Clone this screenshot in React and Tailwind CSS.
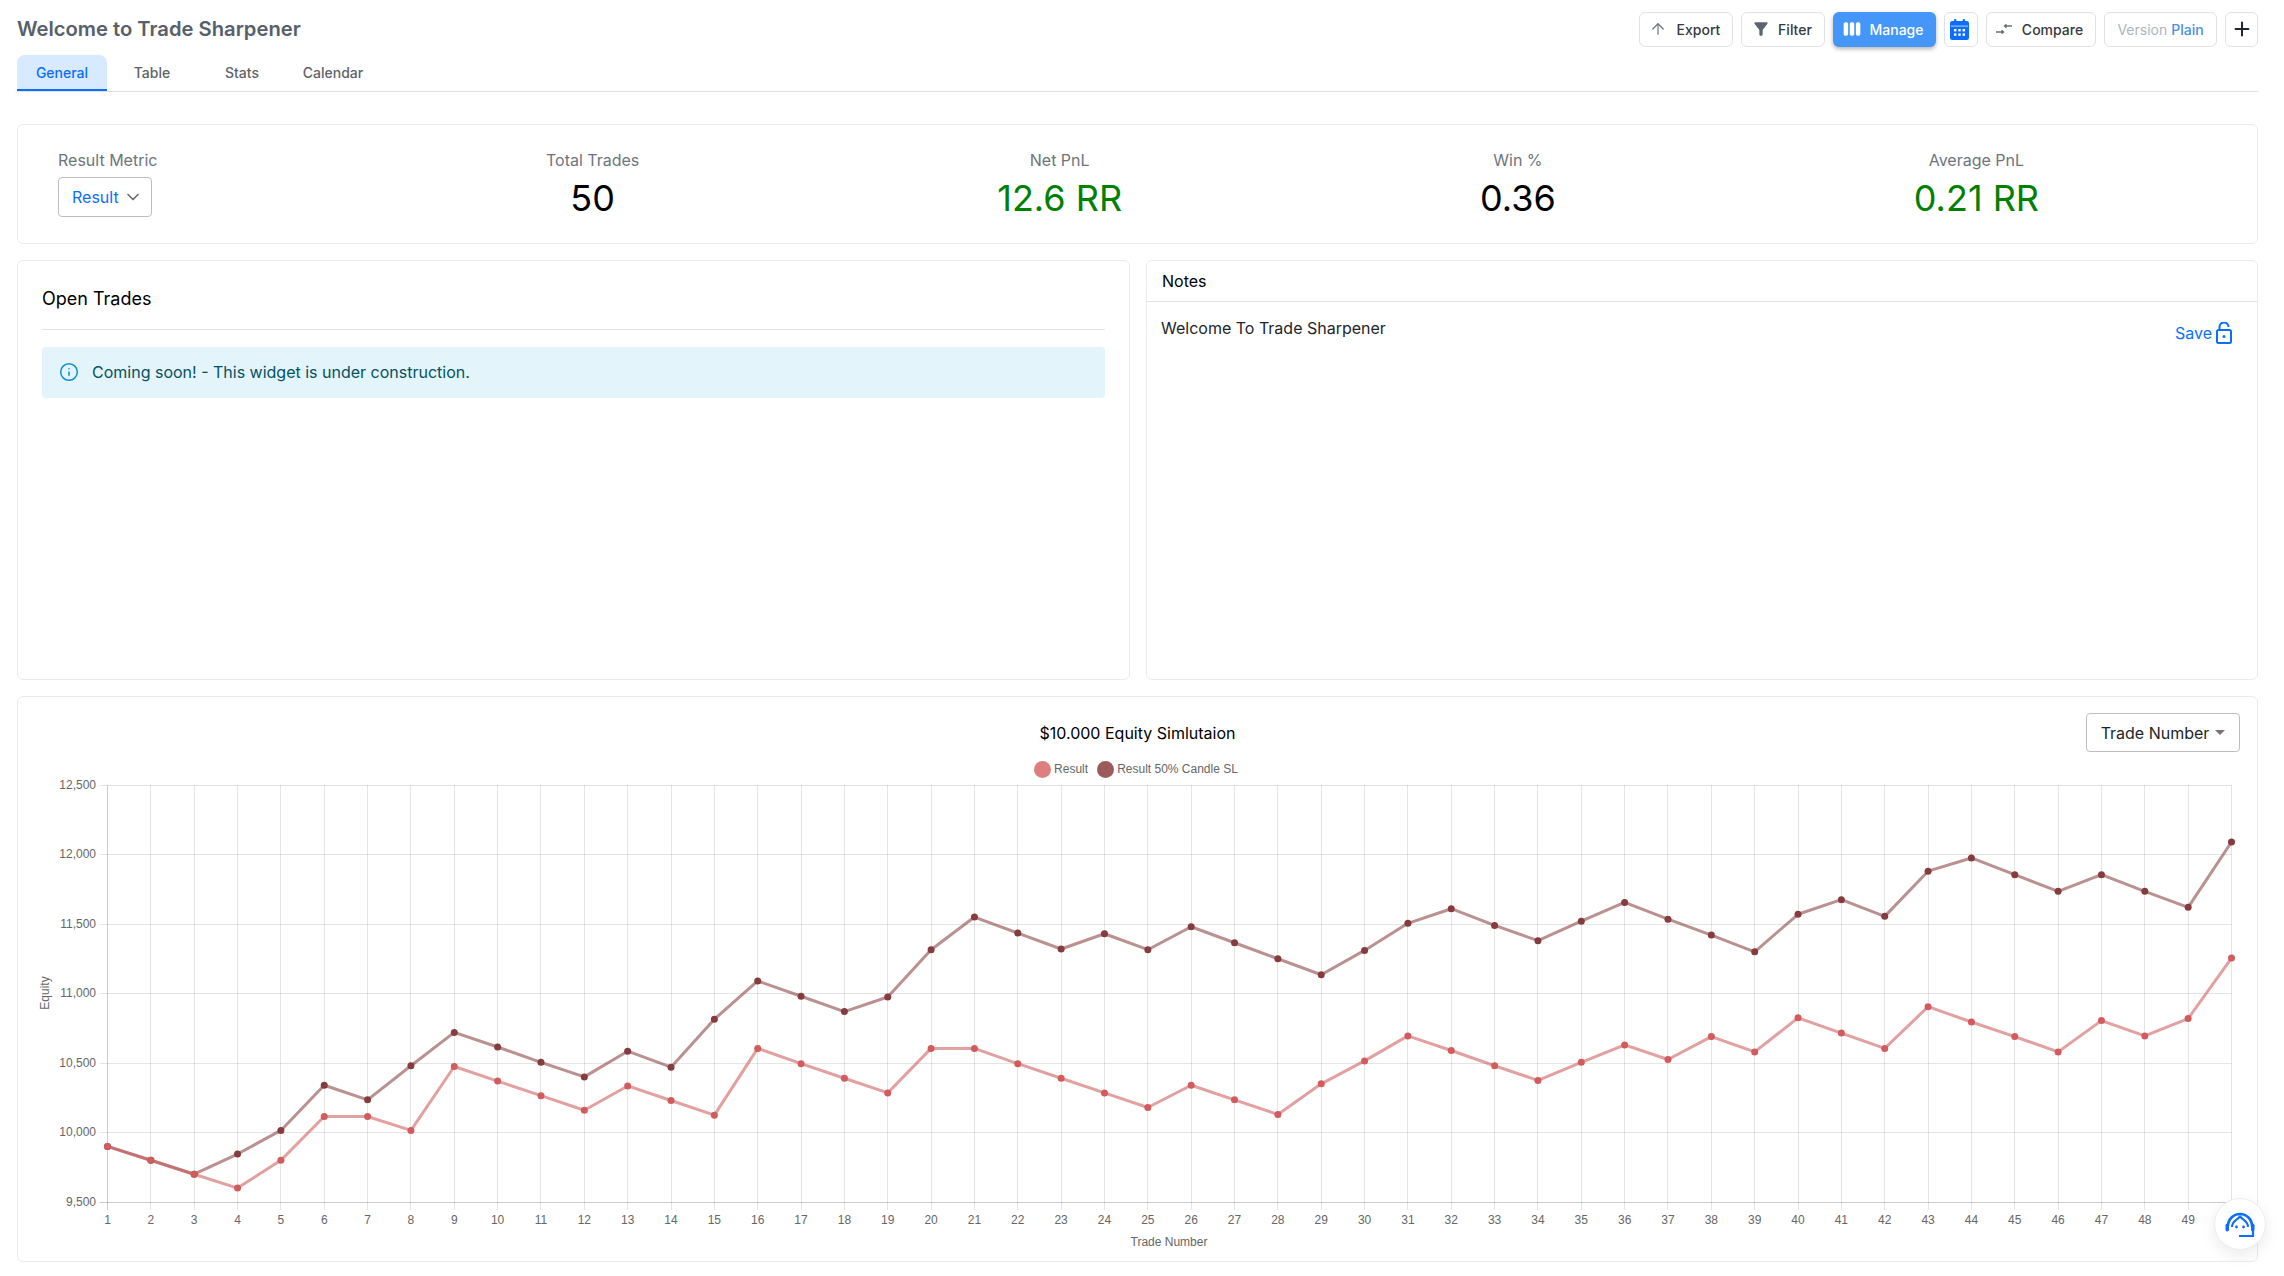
import React from "react";
import { ArrowUp, ChevronDown, Info, Plus } from "lucide-react";
import { MdFilterAlt, MdViewWeek } from "react-icons/md";

const font = { fontFamily: "Inter, 'Liberation Sans', sans-serif" };

const S1 = [9900,9800,9700,9600,9800,10115,10115,10015,10475,10370,10265,10160,10335,10230,10125,10605,10495,10390,10285,10605,10605,10495,10390,10285,10180,10340,10235,10130,10350,10515,10695,10590,10480,10375,10505,10630,10525,10690,10580,10825,10715,10605,10905,10795,10690,10580,10805,10695,10820,11255];
const S2 = [9900,9800,9700,9845,10015,10340,10235,10480,10720,10615,10505,10400,10585,10470,10815,11090,10980,10870,10975,11315,11550,11435,11320,11430,11315,11480,11365,11250,11135,11310,11505,11610,11490,11380,11520,11655,11535,11420,11300,11570,11675,11555,11880,11975,11855,11735,11855,11735,11620,12090];

const X0 = 107.5, X1 = 2231.5, YT = 785, YB = 1202;
const px = (i) => X0 + (i * (X1 - X0)) / 49;
const py = (v) => YB - ((v - 9500) / 3000) * (YB - YT);
const TICKS = [12500, 12000, 11500, 11000, 10500, 10000, 9500];

function Series({ data, line, point }) {
  return (
    <g>
      <polyline points={data.map((v, i) => `${px(i)},${py(v)}`).join(" ")} fill="none" stroke={line} strokeWidth="3" strokeLinejoin="round" />
      {data.map((v, i) => (
        <circle key={i} cx={px(i)} cy={py(v)} r="3.5" fill={point} />
      ))}
    </g>
  );
}

function Chart() {
  const txt = { fontFamily: "'Liberation Sans', Arial, sans-serif", fontSize: 12, fill: "#666" };
  return (
    <svg className="block w-full h-[482px]" viewBox="18 778 2239 482">
      {Array.from({ length: 50 }, (_, i) => {
        const x = Math.floor(px(i)) + 0.5;
        return (
          <g key={i}>
            <line x1={x} x2={x} y1={YT} y2={YB + 8} stroke={i === 0 ? "rgba(0,0,0,0.2)" : "rgba(0,0,0,0.1)"} />
            <text x={px(i)} y={1224} textAnchor="middle" {...txt}>{i + 1}</text>
          </g>
        );
      })}
      {TICKS.map((t) => {
        const y = Math.floor(py(t)) + 0.5;
        return (
          <g key={t}>
            <line x1={X0 - 8} x2={X1} y1={y} y2={y} stroke={t === 9500 ? "rgba(0,0,0,0.2)" : "rgba(0,0,0,0.1)"} />
            <text x={96} y={y + 3.5} textAnchor="end" {...txt}>{t.toLocaleString("en-US")}</text>
          </g>
        );
      })}
      <Series data={S2} line="rgba(128,50,50,0.54)" point="#853c3e" />
      <Series data={S1} line="rgba(205,92,92,0.58)" point="#d25b5d" />
      <text x={1169} y={1245.5} textAnchor="middle" {...txt}>Trade Number</text>
      <text transform="translate(49 993) rotate(-90)" textAnchor="middle" {...txt}>Equity</text>
    </svg>
  );
}

function Btn({ children, className = "" }) {
  return (
    <button className={`h-[35px] pb-[1px] flex items-center justify-center rounded-[6px] border border-[#dee2e6] bg-white text-[14px] font-medium text-[#343a40] ${className}`}>
      {children}
    </button>
  );
}

function Stat({ label, value, green }) {
  return (
    <div className="flex flex-col items-center">
      <div className="text-[16px] leading-[24px] text-[#6c757d]">{label}</div>
      <div className={`text-[36px] leading-[52px] font-normal ${green ? "text-[#008000]" : "text-black"}`}>{value}</div>
    </div>
  );
}

export default function App() {
  return (
    <div style={font} className="relative h-[1276px] overflow-hidden bg-white pl-[17px] pr-[26px] pt-[12px]">
      <div className="flex items-center justify-between h-[35px]">
        <h1 className="text-[20.2px] font-semibold text-[#56606b] -mt-[1px]">Welcome to Trade Sharpener</h1>
        <div className="flex items-center gap-[8px]">
          <Btn className="w-[94px] gap-[10px] pr-[3px]"><ArrowUp size={18} strokeWidth={1.6} className="text-[#6c757d]" />Export</Btn>
          <Btn className="w-[84px] gap-[7px] pr-[3px]"><MdFilterAlt size={20} className="text-[#5c656e]" />Filter</Btn>
          <button className="w-[103px] h-[35px] pr-[4px] pb-[1px] flex items-center justify-center gap-[8px] rounded-[6px] bg-[#4496f8] text-[14px] font-medium text-white shadow-[0_2px_4px_rgba(0,0,0,0.3)]"><MdViewWeek size={20} />Manage</button>
          <Btn className="w-[34px] pr-[3px]">
            <svg width="19" height="21" viewBox="0 0 19 21" fill="#0d6efd">
              <rect x="4" y="0" width="2.4" height="4" rx="1" />
              <rect x="12.6" y="0" width="2.4" height="4" rx="1" />
              <rect x="0" y="2" width="19" height="19" rx="2.2" />
              <rect x="1" y="6.6" width="17" height="1" fill="#fff" opacity="0.7" />
              <g fill="#fff">
                <rect x="4" y="10" width="2.4" height="2.4" />
                <rect x="8.3" y="10" width="2.4" height="2.4" />
                <rect x="12.6" y="10" width="2.4" height="2.4" />
                <rect x="4" y="14.4" width="2.4" height="2.4" />
                <rect x="8.3" y="14.4" width="2.4" height="2.4" />
                <rect x="12.6" y="14.4" width="2.4" height="2.4" />
              </g>
            </svg>
          </Btn>
          <Btn className="w-[110px] gap-[10px] pr-[3px]">
            <svg width="16" height="10" viewBox="0 0 16 10" fill="none" stroke="#5c656e" strokeWidth="1.4">
              <path d="M0 8H6" /><path d="M5.5 5.5L8.5 8L5.5 10.5Z" fill="#5c656e" stroke="none" />
              <path d="M16 2H10" /><path d="M10.5 -0.5L7.5 2L10.5 4.5Z" fill="#5c656e" stroke="none" />
            </svg>
            Compare
          </Btn>
          <Btn className="w-[113px] gap-[4px] !font-normal text-[13.5px]"><span className="text-[#adb5bd]">Version</span><span className="text-[#4a90e2] font-medium">Plain</span></Btn>
          <Btn className="w-[33px]"><Plus size={22} strokeWidth={2.2} className="text-[#212529]" /></Btn>
        </div>
      </div>

      <div className="mt-[8px] flex border-b border-[#dee2e6] h-[37px] text-[14px] font-medium text-[#5f6368]">
        <div className="w-[90px] h-[36px] flex items-center justify-center rounded-t-[8px] bg-[#d7eaff] border-b-[2px] border-[#0d6efd] text-[#0d6efd]">General</div>
        <div className="w-[90px] h-[35px] flex items-center justify-center">Table</div>
        <div className="w-[90px] h-[35px] flex items-center justify-center">Stats</div>
        <div className="w-[92px] h-[35px] flex items-center justify-center">Calendar</div>
      </div>

      <div className="mt-[32px] h-[120px] rounded-[6px] border border-[#e9ecef] pl-[40px] pr-[218px] flex items-start justify-between pt-[23px]">
        <div className="w-[130px]">
          <div className="text-[16px] leading-[24px] text-[#6c757d]">Result Metric</div>
          <div className="mt-[5px] w-[94px] h-[40px] rounded-[4px] border border-[#bdbdbd] flex items-center pl-[13px] gap-[4px] text-[16px] text-[#0d6efd]">
            Result<ChevronDown size={20} strokeWidth={2} className="text-[#6b6b6b]" />
          </div>
        </div>
        <Stat label="Total Trades" value="50" />
        <Stat label="Net PnL" value="12.6 RR" green />
        <Stat label="Win %" value="0.36" />
        <Stat label="Average PnL" value="0.21 RR" green />
      </div>

      <div className="mt-[16px] h-[420px] grid grid-cols-[1113px_1fr] gap-[16px]">
        <div className="rounded-[6px] border border-[#e9ecef] px-[24px]">
          <div className="h-[69px] border-b border-[#e1e3e5] flex items-center text-[18px] pt-[6px] font-normal text-black">Open Trades</div>
          <div className="mt-[17px] h-[51px] rounded-[4px] bg-[#e3f4fb] flex items-center gap-[13px] pl-[17px] pb-[1px] text-[16px] text-[#055160]">
            <Info size={20} strokeWidth={1.8} className="text-[#0b8fd9]" />
            Coming soon! - This widget is under construction.
          </div>
        </div>
        <div className="rounded-[6px] border border-[#e9ecef]">
          <div className="h-[41px] border-b border-[#e1e3e5] flex items-center pl-[15px] text-[16px] text-black">Notes</div>
          <div className="flex items-start justify-between pl-[14px] pr-[25px] pt-[14px]">
            <div className="text-[16px] leading-[24px] text-[#212529]">Welcome To Trade Sharpener</div>
            <div className="mt-[5px] flex items-center gap-[4px] text-[16px] text-[#0d6efd]">
              Save
              <svg width="16" height="22" viewBox="0 0 16 22" fill="none" stroke="#0d6efd" strokeWidth="2">
                <rect x="1" y="8" width="14" height="13" rx="1.5" />
                <path d="M3.5 8V5a4.5 4.5 0 0 1 9 0" />
                <circle cx="8" cy="14.5" r="1.5" fill="#0d6efd" stroke="none" />
              </svg>
            </div>
          </div>
        </div>
      </div>

      <div className="mt-[16px] h-[566px] rounded-[6px] border border-[#e9ecef]">
        <div className="pt-[16px] px-[17px] grid grid-cols-[1fr_auto_1fr] items-center">
          <div />
          <div className="text-[16px] font-normal text-black">$10.000 Equity Simlutaion</div>
          <div className="flex justify-end">
            <div className="w-[154px] h-[39px] rounded-[4px] border border-[#bdbdbd] flex items-center justify-center gap-[6px] text-[16px] text-[#212529]">
              Trade Number
              <span className="w-0 h-0 border-x-[5.5px] border-x-transparent border-t-[5.5px] border-t-[#757575]" />
            </div>
          </div>
        </div>
        <div className="mt-[8px] h-[18px] pr-[3px] flex items-center justify-center text-[12px] text-[#666]" style={{ fontFamily: "'Liberation Sans', Arial, sans-serif" }}>
          <span className="w-[17px] h-[17px] rounded-full bg-[#de7f7f]" />
          <span className="ml-[3px]">Result</span>
          <span className="ml-[9px] w-[17px] h-[17px] rounded-full bg-[#9c5a5a]" />
          <span className="ml-[3px]">Result 50% Candle SL</span>
        </div>
        <Chart />
      </div>

      <div className="fixed right-[18px] bottom-[26px] w-[52px] h-[52px] rounded-full bg-white border border-[#e9ecef] shadow-[0_6px_16px_rgba(0,0,0,0.08)] flex items-center justify-center">
        <svg width="30" height="27" viewBox="0 0 30 27" fill="none" stroke="#0d6efd" strokeWidth="2.6">
          <path d="M3 15A12 12 0 0 1 27 15" />
          <path d="M7 16C7 10 11 10 15 5.5C19 10 23 10 23 16" strokeWidth="2" />
          <rect x="0.5" y="12.5" width="3.5" height="8" rx="1.7" fill="#0d6efd" stroke="none" />
          <rect x="26" y="12.5" width="3.5" height="8" rx="1.7" fill="#0d6efd" stroke="none" />
          <circle cx="11.5" cy="16" r="1.4" fill="#0d6efd" stroke="none" />
          <circle cx="18.5" cy="16" r="1.4" fill="#0d6efd" stroke="none" />
          <path d="M28 19V25H14" strokeWidth="2.2" />
        </svg>
      </div>
    </div>
  );
}
